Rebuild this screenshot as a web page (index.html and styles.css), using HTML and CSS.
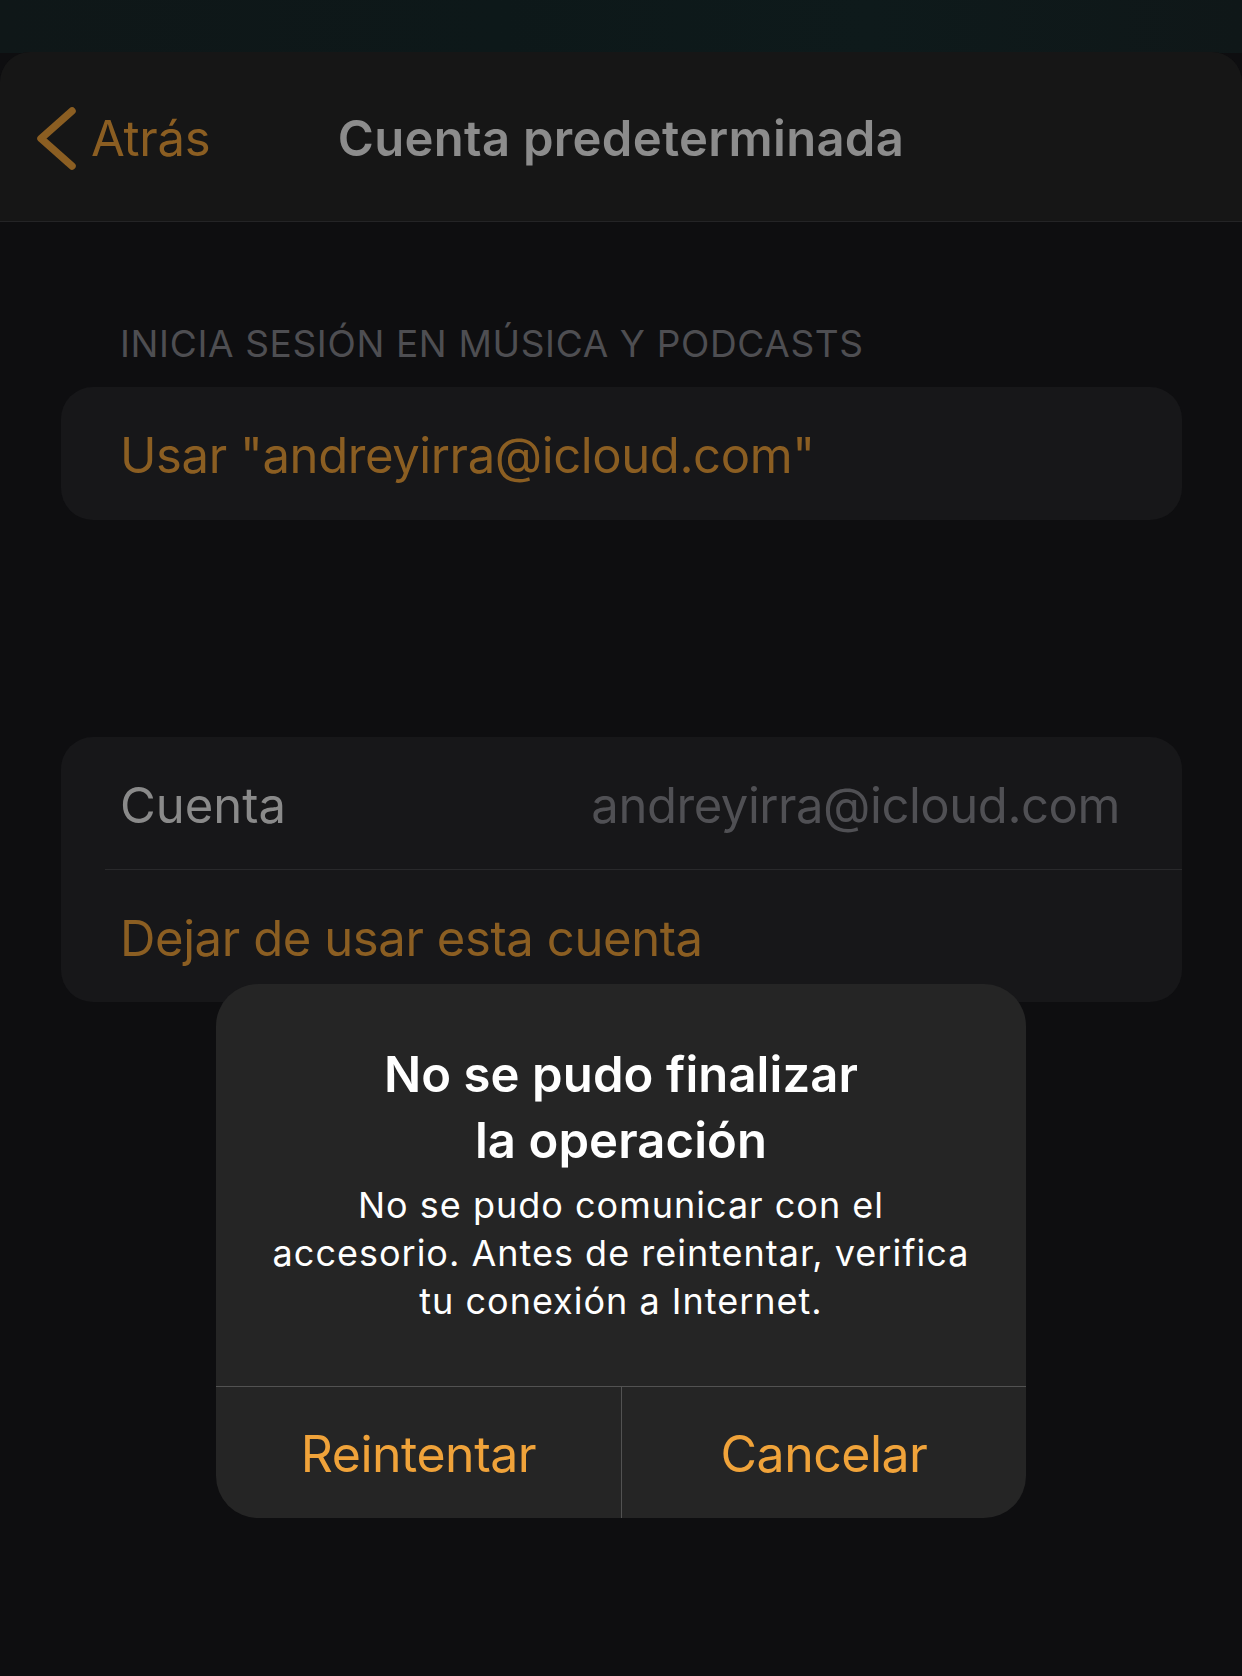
FILE: index.html
```html
<!DOCTYPE html>
<html lang="es">
<head>
<meta charset="utf-8">
<title>Cuenta predeterminada</title>
<link rel="stylesheet" href="styles.css">
</head>
<body>
<div class="screen">
  <div class="backdrop"></div>
  <div class="sheet">
    <header class="nav">
      <div class="nav-left">
        <a class="back">
          <svg class="chev" width="44" height="70" viewBox="0 0 44 70"><path d="M38 7 L7 34.5 L38 62" fill="none" stroke="#8b5e22" stroke-width="7.5" stroke-linecap="round" stroke-linejoin="round"/></svg>
          <span class="back-label">Atrás</span>
        </a>
      </div>
      <h1 class="nav-title">Cuenta predeterminada</h1>
      <div class="nav-right"></div>
    </header>
    <main class="content">
      <div class="section-header">INICIA SESIÓN EN MÚSICA Y PODCASTS</div>
      <div class="group">
        <div class="row"><span class="link">Usar "andreyirra@icloud.com"</span></div>
      </div>
      <div class="group group-account">
        <div class="row row-split">
          <span class="label">Cuenta</span>
          <span class="value">andreyirra@icloud.com</span>
        </div>
        <div class="separator"></div>
        <div class="row"><span class="link">Dejar de usar esta cuenta</span></div>
      </div>
    </main>
  </div>
  <div class="alert">
    <div class="alert-body">
      <div class="alert-title">No se pudo finalizar<br>la operación</div>
      <div class="alert-message">No se pudo comunicar con el<br>accesorio. Antes de reintentar, verifica<br>tu conexión a Internet.</div>
    </div>
    <div class="alert-actions">
      <div class="alert-btn">Reintentar</div>
      <div class="alert-btn alert-btn-right">Cancelar</div>
    </div>
  </div>
</div>
</body>
</html>
```
FILE: styles.css
```css
* { box-sizing: border-box; }
html, body {
  margin: 0;
  padding: 0;
  background: #0e0e10;
}
body {
  font-family: Inter, "Noto Sans", "DejaVu Sans", sans-serif;
  -webkit-font-smoothing: antialiased;
}
.screen {
  position: relative;
  width: 1242px;
  height: 1676px;
  overflow: hidden;
  background: #0e0e10;
  display: flex;
  flex-direction: column;
}
.backdrop {
  height: 53px;
  flex: none;
  background: linear-gradient(90deg, #0f1718 0%, #0d1819 40%, #0e1a1b 70%, #0f1718 100%);
}
.sheet {
  flex: 1;
  background: #0e0e10;
  border-radius: 30px 30px 0 0;
  overflow: hidden;
  margin-top: -1px;
}
.nav {
  height: 170px;
  background: #161616;
  border-bottom: 1px solid #242426;
  display: grid;
  grid-template-columns: 1fr auto 1fr;
  align-items: center;
  padding-top: 5px;
}
.nav-left {
  padding-left: 34px;
}
.back {
  display: flex;
  align-items: center;
  gap: 13px;
  color: #8b5e22;
  font-size: 49px;
  line-height: 70px;
  letter-spacing: -0.3px;
}
.chev { display: block; flex: none; margin-top: 0; }
.nav-title {
  margin: 0;
  font-size: 49px;
  font-weight: 600;
  color: #8c8c8c;
  line-height: 70px;
  letter-spacing: 0.3px;
}
.content {
  padding-top: 99px;
}
.section-header {
  margin-left: 120px;
  font-size: 37px;
  line-height: 46px;
  color: #4e4e52;
  letter-spacing: 0.65px;
}
.group {
  margin: 20px 60px 0 61px;
  background: #171719;
  border-radius: 32px;
}
.group-account {
  margin-top: 217px;
}
.row {
  height: 133px;
  display: flex;
  align-items: center;
  padding: 4px 62px 0 59px;
  font-size: 49px;
  letter-spacing: -0.4px;
}
.group-account .row { height: 132px; }
.row-split { justify-content: space-between; }
.link { color: #8b5e22; }
.label { color: #8a8a8a; letter-spacing: 0; }
.value { color: #505054; letter-spacing: -0.45px; }
.separator {
  height: 1px;
  margin-left: 44px;
  background: #29292b;
}
.alert {
  position: absolute;
  left: 216px;
  top: 984px;
  width: 810px;
  height: 534px;
  background: #252525;
  border-radius: 42px;
  display: flex;
  flex-direction: column;
  overflow: hidden;
}
.alert-body {
  flex: 1;
  padding-top: 58px;
  text-align: center;
  color: #ffffff;
}
.alert-title {
  font-size: 49px;
  font-weight: 600;
  line-height: 66px;
  letter-spacing: 0.1px;
}
.alert-message {
  margin-top: 7px;
  font-size: 36px;
  line-height: 48px;
  letter-spacing: 1px;
}
.alert-actions {
  height: 132px;
  flex: none;
  border-top: 1px solid #525252;
  display: grid;
  grid-template-columns: 1fr 1fr;
}
.alert-btn {
  display: flex;
  align-items: center;
  justify-content: center;
  color: #f0a33a;
  font-size: 50px;
  letter-spacing: -0.5px;
  padding-top: 2px;
}
.alert-btn-right {
  border-left: 1px solid #525252;
}
```
